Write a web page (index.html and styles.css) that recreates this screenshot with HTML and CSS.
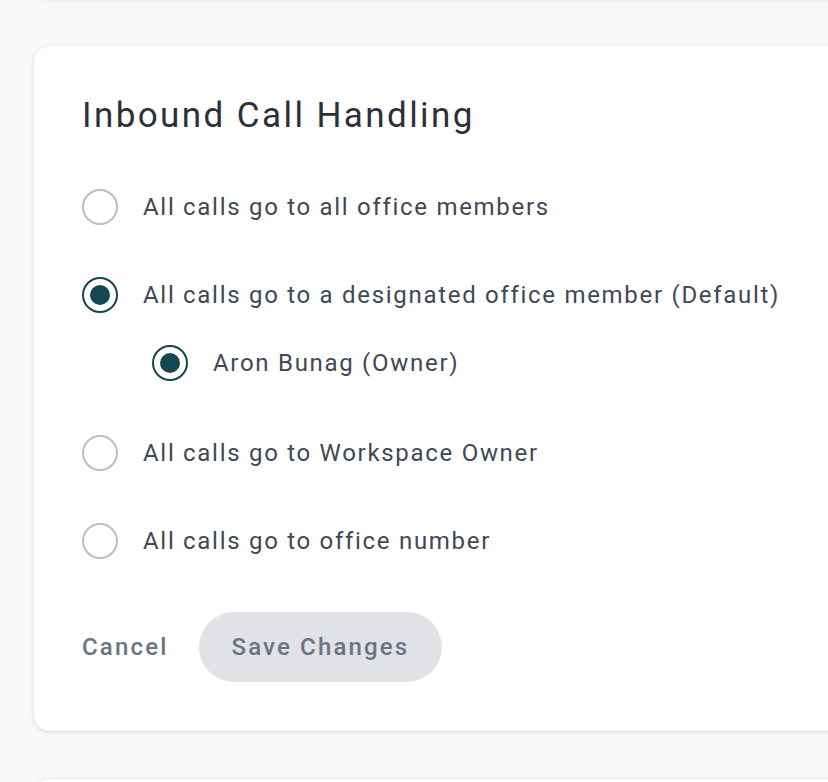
FILE: index.html
```html
<!DOCTYPE html>
<html>
<head>
<meta charset="utf-8">
<link rel="stylesheet" href="styles.css">
</head>
<body>
<div class="page">
  <div class="card card-prev"></div>
  <div class="card card-main">
    <h2 class="title">Inbound Call Handling</h2>
    <div class="options">
      <label class="option">
        <span class="radio"></span>
        <span class="label">All calls go to all office members</span>
      </label>
      <label class="option">
        <span class="radio checked"></span>
        <span class="label">All calls go to a designated office member (Default)</span>
      </label>
      <label class="option sub">
        <span class="radio checked"></span>
        <span class="label">Aron Bunag (Owner)</span>
      </label>
      <label class="option after-sub">
        <span class="radio"></span>
        <span class="label">All calls go to Workspace Owner</span>
      </label>
      <label class="option">
        <span class="radio"></span>
        <span class="label">All calls go to office number</span>
      </label>
    </div>
    <div class="actions">
      <button class="btn-cancel">Cancel</button>
      <button class="btn-save">Save Changes</button>
    </div>
  </div>
  <div class="card card-next"></div>
</div>
</body>
</html>
```

FILE: styles.css
```css
html, body {
  margin: 0;
  padding: 0;
  background: #f8f8f9;
  overflow: hidden;
  font-family: Roboto, "Noto Sans", sans-serif;
}
.page {
  padding-left: 34px;
  display: flex;
  flex-direction: column;
  gap: 48px;
  margin-top: -30px;
}
.card {
  background: #ffffff;
  border-radius: 16px;
  box-shadow: 0 1px 4px rgba(30, 35, 50, 0.16);
  width: 840px;
  box-sizing: border-box;
}
.card-prev {
  height: 28px;
  border-radius: 0 0 16px 16px;
}
.card-main {
  height: 685px;
  padding: 49px 48px 0 48px;
}
.card-next {
  height: 60px;
}
.title {
  margin: 0;
  font-size: 35px;
  line-height: 42px;
  font-weight: 400;
  color: #2b3039;
  letter-spacing: 0.069em;
}
.options {
  display: flex;
  flex-direction: column;
  gap: 52px;
  margin-top: 52px;
}
.option {
  display: flex;
  align-items: center;
  height: 36px;
  gap: 25px;
}
.option.sub {
  margin-top: -20px;
  padding-left: 70px;
}
.option.after-sub {
  margin-top: 2px;
}
.radio {
  width: 36px;
  height: 36px;
  box-sizing: border-box;
  border-radius: 50%;
  border: 2px solid #b9bec7;
  display: flex;
  align-items: center;
  justify-content: center;
  flex: none;
}
.radio.checked {
  border-color: #15474f;
}
.radio.checked::after {
  content: "";
  width: 20px;
  height: 20px;
  border-radius: 50%;
  background: #15474f;
}
.label {
  font-size: 24px;
  color: #414855;
  line-height: 30px;
  letter-spacing: 0.071em;
}
.actions {
  display: flex;
  align-items: center;
  margin-top: 53px;
  gap: 31px;
}
.btn-cancel, .btn-save {
  font-family: Roboto, "Noto Sans", sans-serif;
  font-size: 24px;
  font-weight: 500;
  color: #6b7482;
  border: none;
  background: none;
  padding: 0;
  cursor: pointer;
  letter-spacing: 0.09em;
}
.btn-save {
  background: #e1e2e6;
  height: 70px;
  border-radius: 35px;
  padding: 0 33px 0 32px;
}
```
